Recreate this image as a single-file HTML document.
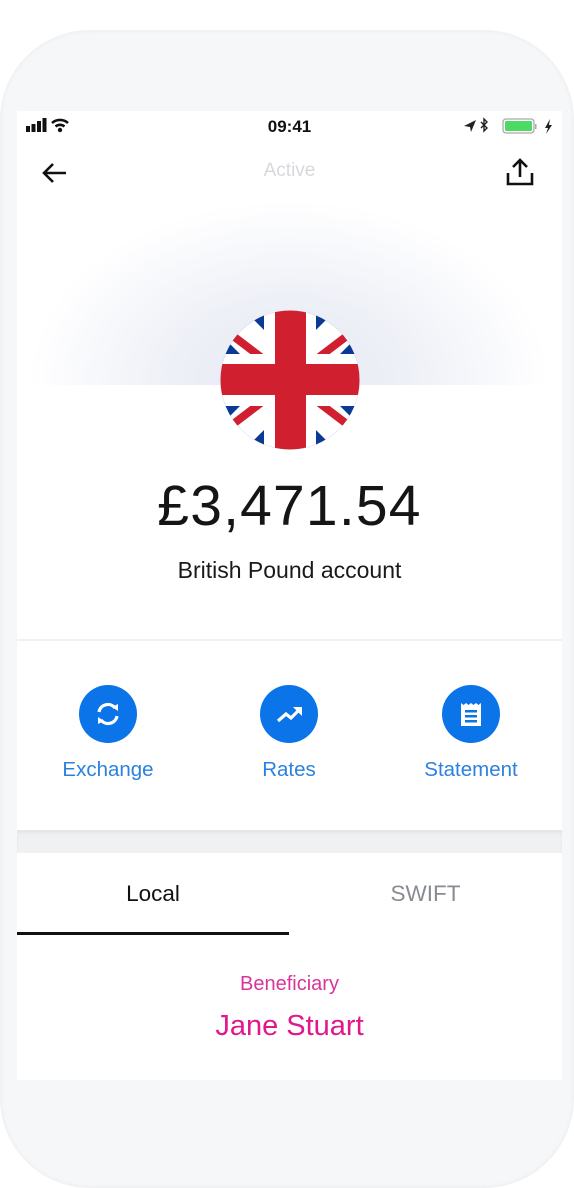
<!DOCTYPE html>
<html><head><style>
*{margin:0;padding:0;box-sizing:border-box}
body{width:574px;height:1188px;background:#fff;font-family:"Liberation Sans",sans-serif;position:relative;overflow:hidden}
.shell{position:absolute;left:0;top:30px;width:574px;height:1158px;background:#f6f7f9;border-radius:90px;box-shadow:inset 0 0 6px rgba(0,0,0,.06)}
.screen{position:absolute;left:17px;top:111px;width:545px;height:969px;background:#fff;overflow:hidden}
.glow{position:absolute;left:0;top:60px;width:545px;height:214px;background:radial-gradient(ellipse 260px 180px at 272px 210px,#e6e9f3 0%,#eef0f7 45%,rgba(255,255,255,0) 100%)}
.abs{position:absolute}
.c{text-align:center;width:545px;left:0}
.btn{position:absolute;top:574px;width:58px;height:58px;border-radius:50%;background:#0a74e8}
.lbl{position:absolute;top:647px;font-size:20.5px;color:#2b82de;text-align:center;width:160px}
</style></head><body>
<div class="shell"></div>
<div class="screen">
 <div class="glow"></div>
 <svg class="abs" style="left:8px;top:6px" width="52" height="16"><rect x="1" y="9" width="4" height="6" fill="#111"/><rect x="6.5" y="7" width="4" height="8" fill="#111"/><rect x="12" y="4" width="4" height="11" fill="#111"/><rect x="17.5" y="1" width="4" height="14" fill="#111"/>
 <path d="M27 6a12 12 0 0 1 16 0M30.5 9.5a7 7 0 0 1 9 0" stroke="#111" stroke-width="2.6" fill="none"/><circle cx="35" cy="13" r="2.2" fill="#111"/></svg>
 <div class="abs c" style="top:6px;font-size:17px;font-weight:bold;color:#111">09:41</div>
 <svg class="abs" style="left:444px;top:5px" width="96" height="20"><path d="M3 10l12-6-5 12-1-5z" fill="#222"/><path d="M20 6l6 6-3 3V3l3 3-6 6" stroke="#222" stroke-width="1.4" fill="none"/><rect x="42" y="3" width="31" height="14" rx="3" fill="none" stroke="#aaa" stroke-width="1.3"/><rect x="44" y="5" width="27" height="10" rx="1.5" fill="#4cd964"/><rect x="74" y="8" width="1.5" height="5" fill="#aaa"/><path d="M89 3l-5 9h3l-2 6 6-9h-3z" fill="#222"/></svg>
 <svg class="abs" style="left:22px;top:49px" width="30" height="26"><path d="M27 13H5M14 4l-9 9 9 9" stroke="#111" stroke-width="2.6" fill="none"/></svg>
 <div class="abs c" style="top:49px;font-size:19px;color:#d6d8dc">Active</div>
 <svg class="abs" style="left:488px;top:46px" width="30" height="30"><path d="M15 20V3M8 10l7-7 7 7M3 16v11h24V16" stroke="#111" stroke-width="2.6" fill="none"/></svg>
 <svg class="abs" style="left:203px;top:199px" width="140" height="140" viewBox="0 0 140 140">
  <defs><clipPath id="cl"><circle cx="70" cy="70" r="69.5"/></clipPath></defs>
  <g clip-path="url(#cl)">
   <rect width="140" height="140" fill="#0b3a94"/>
   <path d="M-10 -10L150 150M150 -10L-10 150" stroke="#fff" stroke-width="34"/>
   <path d="M0 16L50 54M90 86L140 124M140 16L90 54M50 86L0 124" stroke="#d0202f" stroke-width="8"/>
   <rect x="44" y="0" width="52" height="140" fill="#fff"/><rect x="0" y="44" width="140" height="52" fill="#fff"/>
   <rect x="55" y="0" width="31" height="140" fill="#d0202f"/><rect x="0" y="54" width="140" height="31" fill="#d0202f"/>
  </g></svg>
 <div class="abs c" style="top:362px;font-size:57px;color:#151515;letter-spacing:1.2px">£3,471.54</div>
 <div class="abs c" style="top:446px;font-size:23px;color:#1a1a1a">British Pound account</div>
 <div class="abs" style="left:0;top:528px;width:545px;height:2px;background:#f0f1f3"></div>
 <div class="btn" style="left:62px"><svg width="58" height="58"><path d="M20 27a9 9 0 0 1 16-4M38 31a9 9 0 0 1-16 4" stroke="#fff" stroke-width="3.2" fill="none"/><path d="M33 22l6-3 0 7zM25 36l-6 3 0-7z" fill="#fff"/></svg></div>
 <div class="btn" style="left:243px"><svg width="58" height="58"><path d="M18 36l8-7 5 4 9-9" stroke="#fff" stroke-width="3.2" fill="none"/><path d="M33 22h9v9z" fill="#fff"/></svg></div>
 <div class="btn" style="left:425px"><svg width="58" height="58"><path d="M19 18l2.5 2 2.5-2 2.5 2 2.5-2 2.5 2 2.5-2 2.5 2 2.5-2V41H19z" fill="#fff"/><rect x="23" y="25" width="12" height="2.5" fill="#0a74e8"/><rect x="23" y="30" width="12" height="2.5" fill="#0a74e8"/><rect x="23" y="35" width="12" height="2.5" fill="#0a74e8"/></svg></div>
 <div class="lbl" style="left:11px">Exchange</div>
 <div class="lbl" style="left:192px">Rates</div>
 <div class="lbl" style="left:374px">Statement</div>
 <div class="abs" style="left:0;top:719px;width:545px;height:23px;background:#f0f1f3;box-shadow:inset 0 3px 3px rgba(0,0,0,.05)"></div>
 <div class="abs" style="left:0;top:770px;width:272px;text-align:center;font-size:22.5px;color:#111">Local</div>
 <div class="abs" style="left:272px;top:770px;width:273px;text-align:center;font-size:22.5px;color:#888c92">SWIFT</div>
 <div class="abs" style="left:0;top:821px;width:272px;height:3px;background:#111"></div>
 <div class="abs c" style="top:862px;font-size:20px;color:#d8359a">Beneficiary</div>
 <div class="abs c" style="top:899px;font-size:29px;color:#e0188c">Jane Stuart</div>
</div>
</body></html>
